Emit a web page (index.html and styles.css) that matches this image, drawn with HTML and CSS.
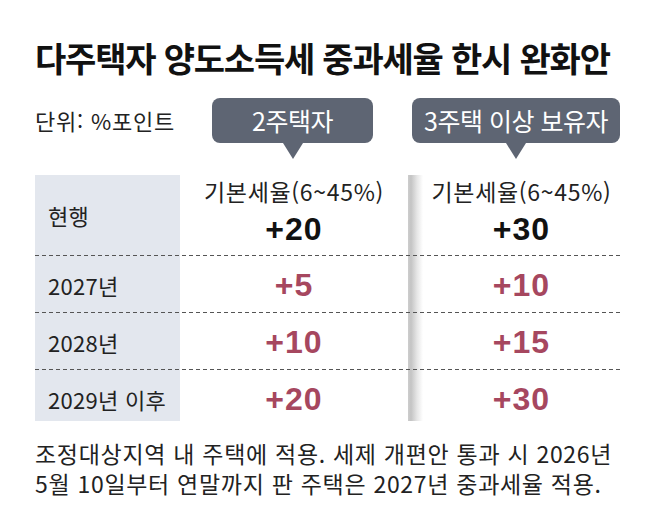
FILE: index.html
```html
<!DOCTYPE html>
<html lang="ko">
<head>
<meta charset="utf-8">
<title>다주택자 양도소득세 중과세율 한시 완화안</title>
<link rel="stylesheet" href="styles.css">
</head>
<body>
<div class="page">
  <h1 class="title">다주택자 양도소득세 중과세율 한시 완화안</h1>
  <div class="head">
    <div class="unit">단위: %포인트</div>
    <div class="bubble-cell"><div class="bubble bubble-a">2주택자</div></div>
    <div class="bubble-cell"><div class="bubble bubble-b">3주택 이상 보유자</div></div>
  </div>
  <div class="table">
    <div class="row row-head">
      <div class="label">현행</div>
      <div class="cell cell-mid">
        <div class="base">기본세율(6~45%)</div>
        <div class="num">+20</div>
      </div>
      <div class="cell cell-right">
        <div class="base">기본세율(6~45%)</div>
        <div class="num">+30</div>
      </div>
    </div>
    <div class="row">
      <div class="label">2027년</div>
      <div class="cell cell-mid"><div class="num red">+5</div></div>
      <div class="cell cell-right"><div class="num red">+10</div></div>
    </div>
    <div class="row">
      <div class="label">2028년</div>
      <div class="cell cell-mid"><div class="num red">+10</div></div>
      <div class="cell cell-right"><div class="num red">+15</div></div>
    </div>
    <div class="row row-last">
      <div class="label">2029년 이후</div>
      <div class="cell cell-mid"><div class="num red">+20</div></div>
      <div class="cell cell-right"><div class="num red">+30</div></div>
    </div>
  </div>
  <div class="note">
    <div class="note-line">조정대상지역 내 주택에 적용. 세제 개편안 통과 시 2026년</div>
    <div class="note-line">5월 10일부터 연말까지 판 주택은 2027년 중과세율 적용.</div>
  </div>
</div>
</body>
</html>
```
FILE: styles.css
```css
html, body {
  margin: 0;
  padding: 0;
  background: #ffffff;
}

body {
  font-family: "Noto Sans CJK KR", "Noto Sans", sans-serif;
  color: #222222;
}

.page {
  width: 585px;
  padding-left: 35px;
  padding-top: 41px;
}

.title {
  margin: 0 0 24px 0;
  font-size: 34px;
  line-height: 33px;
  font-weight: 700;
  letter-spacing: -1.2px;
  color: #111111;
  white-space: nowrap;
}

.head {
  display: grid;
  grid-template-columns: 145px 228px 212px;
  align-items: start;
  margin-bottom: 32px;
}

.unit {
  font-size: 22px;
  line-height: 45px;
  letter-spacing: 0.8px;
  color: #222222;
  white-space: nowrap;
}

.bubble-cell {
  display: flex;
}

.bubble {
  position: relative;
  height: 45px;
  border-radius: 8px;
  background: #5e6573;
  color: #ffffff;
  font-size: 25px;
  line-height: 45px;
  letter-spacing: -0.5px;
  text-align: center;
  white-space: nowrap;
}

.bubble::after {
  content: "";
  position: absolute;
  left: 50%;
  bottom: -16px;
  margin-left: -10px;
  border-top: 16px solid #5e6573;
  border-left: 10px solid transparent;
  border-right: 10px solid transparent;
}

.bubble-a {
  width: 161px;
  margin-left: 32px;
}

.bubble-b {
  width: 208px;
  margin-left: 4px;
}

.table {
  background:
    linear-gradient(to right, #cdcdcd 0, #c4c4c4 3px, #e6e6e6 9px, #ffffff 15px) 373px 0 / 15px 100% no-repeat,
    linear-gradient(#e3e7ee, #e3e7ee) 0 0 / 145px 100% no-repeat;
}

.row {
  display: grid;
  grid-template-columns: 145px 228px 212px;
  height: 57px;
  box-sizing: border-box;
  background: linear-gradient(to right, #555555 4px, transparent 4px) 0 100% / 7px 1px repeat-x;
}

.row-head {
  height: 81px;
}

.row-last {
  height: 51px;
  background: none;
  padding-top: 6px;
}

.label {
  display: flex;
  align-items: center;
  padding-left: 13px;
  font-size: 22px;
  letter-spacing: 0.3px;
  color: #222222;
  white-space: nowrap;
}

.row-head .label {
  padding-bottom: 2px;
}

.cell {
  display: flex;
  flex-direction: column;
  align-items: center;
  justify-content: center;
}

.cell-right {
  padding-left: 15px;
}

.row-head .cell {
  justify-content: flex-start;
  padding-top: 3px;
}

.base {
  font-size: 23px;
  line-height: 26px;
  letter-spacing: 0.7px;
  color: #222222;
  white-space: nowrap;
}

.num {
  font-family: "Liberation Sans", Arial, sans-serif;
  font-weight: 700;
  font-size: 32px;
  line-height: 34px;
  letter-spacing: 1px;
  color: #111111;
}

.row-head .num {
  margin-top: 8px;
}

.red {
  color: #a6475f;
}

.note {
  margin: 17px 0 0 0;
  font-size: 23px;
  line-height: 30px;
  letter-spacing: 0.7px;
  color: #222222;
}

.note-line {
  height: 30px;
  white-space: nowrap;
}
```
